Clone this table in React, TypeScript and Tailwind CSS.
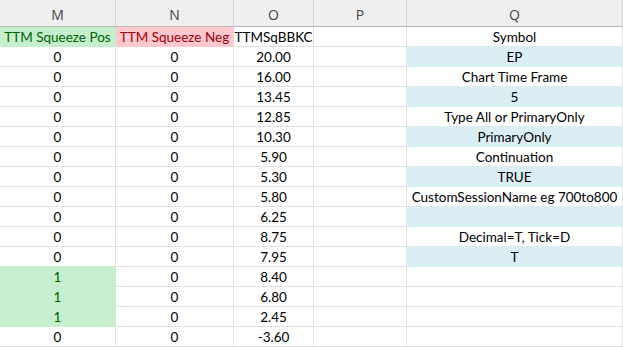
type Fill = 'green' | 'red' | 'blue';
type Cell = { v: string; fill?: Fill };

const fillClass: Record<Fill, string> = {
  green: 'bg-[#c6efce] text-[#006100]',
  red: 'bg-[#ffc7ce] text-[#9c0006]',
  blue: 'bg-[#daeef3] text-black',
};

const rightEdge: Record<Fill | 'grid', string> = {
  green: 'border-r-[#c6efce]',
  red: 'border-r-[#ffc7ce]',
  blue: 'border-r-[#daeef3]',
  grid: 'border-r-[#e1e1e1]',
};

const bottomEdge: Record<Fill | 'grid', string> = {
  green: 'border-b-[#c6efce]',
  red: 'border-b-[#ffc7ce]',
  blue: 'border-b-[#daeef3]',
  grid: 'border-b-[#e1e1e1]',
};

const cols = [
  { letter: 'M', w: 'w-[116px]' },
  { letter: 'N', w: 'w-[118px]' },
  { letter: 'O', w: 'w-[80px]' },
  { letter: 'P', w: 'w-[93px]' },
  { letter: 'Q', w: 'w-[216px]' },
];

const oVals = ['20.00', '16.00', '13.45', '12.85', '10.30', '5.90', '5.30', '5.80', '6.25', '8.75', '7.95', '8.40', '6.80', '2.45', '-3.60'];
const mVals = ['0', '0', '0', '0', '0', '0', '0', '0', '0', '0', '0', '1', '1', '1', '0'];
const qVals = ['EP', 'Chart Time Frame', '5', 'Type All or PrimaryOnly', 'PrimaryOnly', 'Continuation', 'TRUE', 'CustomSessionName eg 700to800', '', 'Decimal=T, Tick=D', 'T', '', '', '', ''];

const rows: Cell[][] = [
  [
    { v: 'TTM Squeeze Pos', fill: 'green' },
    { v: 'TTM Squeeze Neg', fill: 'red' },
    { v: 'TTMSqBBKC' },
    { v: '' },
    { v: 'Symbol' },
  ],
  ...oVals.map((o, i): Cell[] => [
    mVals[i] === '1' ? { v: '1', fill: 'green' } : { v: '0' },
    { v: '0' },
    { v: o },
    { v: '' },
    { v: qVals[i], fill: i < 11 && i % 2 === 0 ? 'blue' : undefined },
  ]),
];

export default function App() {
  return (
    <div className="w-[623px] h-[348px] overflow-hidden bg-white font-['Lato','Liberation_Sans',sans-serif]">
      <div className="flex h-[27px] bg-[#efefef] border-b border-[#b8b8b8]">
        {cols.map((c) => (
          <div
            key={c.letter}
            className={`${c.w} shrink-0 flex items-center justify-center border-r border-[#d4d4d4] pt-[2px] text-[14px] text-[#444] font-['Open_Sans','Noto_Sans',sans-serif]`}
          >
            {c.letter}
          </div>
        ))}
      </div>
      {rows.map((row, r) => (
        <div key={r} className="flex h-[20px]">
          {row.map((cell, c) => {
            const right = cell.fill ?? row[c + 1]?.fill ?? 'grid';
            const bottom = cell.fill ?? rows[r + 1]?.[c].fill ?? 'grid';
            return (
              <div
                key={c}
                className={`${cols[c].w} shrink-0 flex items-end justify-center border-r border-b whitespace-nowrap text-[13.5px] leading-[18px] ${cell.fill ? fillClass[cell.fill] : 'text-black'} ${rightEdge[right]} ${bottomEdge[bottom]}`}
              >
                {cell.v}
              </div>
            );
          })}
        </div>
      ))}
    </div>
  );
}
